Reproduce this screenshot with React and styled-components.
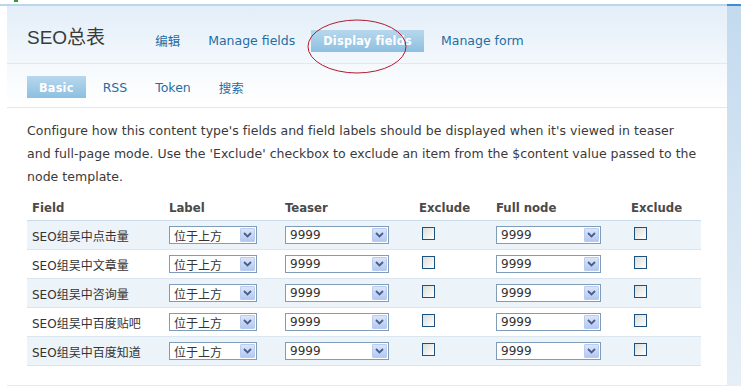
import React from 'react';
import styled, { createGlobalStyle } from 'styled-components';

const GlobalStyle = createGlobalStyle`
  html, body {
    margin: 0;
    padding: 0;
    background: #ffffff;
  }
  body {
    font-family: "DejaVu Sans", "Noto Sans CJK SC", sans-serif;
    color: #333;
  }
`;

const Page = styled.div`
  display: flex;
  width: 741px;
  height: 386px;
  overflow: hidden;
  position: relative;
`;

const MainCol = styled.div`
  width: 727px;
  display: flex;
  flex-direction: column;
`;

const TopStrip = styled.div`
  height: 4px;
  display: flex;
`;

const GreenMark = styled.div`
  width: 4px;
  height: 2px;
  margin-left: 14px;
  background: #2f9a3c;
`;

const TopLine = styled.div`
  height: 2px;
  background: #bcd6ec;
`;

const Panel = styled.div`
  margin-left: 7px;
  flex: 1;
  display: flex;
  flex-direction: column;
  background: #fff;
`;

const Header = styled.div`
  height: 57px;
  display: flex;
  align-items: center;
  padding-left: 20px;
  background: linear-gradient(#e3eef8, #f3f8fc);
  border-bottom: 1px solid #dfe9f1;
`;

const Title = styled.h1`
  margin: 2px 38px 0 0;
  font-size: 19px;
  font-weight: normal;
  color: #3a3a3a;
  font-family: "Liberation Sans", "Noto Sans CJK SC", sans-serif;
`;

const TabList = styled.div`
  display: flex;
  align-items: center;
  margin-top: 12px;
`;

const Tab = styled.a`
  display: flex;
  align-items: center;
  height: 22px;
  padding: 0 12px;
  margin-right: ${({ active }) => (active ? '5px' : '4px')};
  font-size: 12.5px;
  text-decoration: none;
  color: ${({ active }) => (active ? '#ffffff' : '#1f6ea6')};
  font-weight: ${({ active }) => (active ? 'bold' : 'normal')};
  letter-spacing: ${({ active }) => (active ? '0.25px' : '0')};
  font-family: ${({ active }) =>
    active
      ? '"DejaVu Sans Condensed", "DejaVu Sans", sans-serif'
      : '"DejaVu Sans", "Noto Sans CJK SC", sans-serif'};
  background: ${({ active }) =>
    active ? 'linear-gradient(#b7d8ee, #8dbfe0)' : 'transparent'};
`;

const SubTabs = styled.div`
  display: flex;
  align-items: center;
  padding: 12px 0 9px 20px;
  background: linear-gradient(#f5f9fc, #ffffff);
  border-bottom: 1px solid #e1e9ef;
`;

const Body = styled.div`
  flex: 1;
  padding: 11px 20px 0 20px;
  border-bottom: 1px solid #e4ebf1;
`;

const Intro = styled.p`
  margin: 0;
  font-size: 12.5px;
  letter-spacing: 0.03px;
  line-height: 23px;
  white-space: nowrap;
  color: #3a3a3a;
`;

const Table = styled.div`
  margin-top: 6px;
  width: 674px;
`;

const Row = styled.div`
  display: grid;
  grid-template-columns: 137px 116px 134px 77px 135px 75px;
  align-items: ${({ head }) => (head ? 'end' : 'center')};
  box-sizing: border-box;
  height: ${({ head }) => (head ? '27px' : '29px')};
  padding-bottom: ${({ head }) => (head ? '5px' : '0')};
  background: ${({ head, shade }) =>
    head ? 'transparent' : shade ? '#ecf4fa' : '#ffffff'};
  border-bottom: 1px solid ${({ head }) => (head ? '#c9dded' : '#d9e6f0')};
`;

const HeadCell = styled.div`
  padding-left: 5px;
  font-family: "DejaVu Sans Condensed", "DejaVu Sans", sans-serif;
  font-size: 13px;
  font-weight: bold;
  color: #4a4a4a;
`;

const Cell = styled.div`
  padding-left: 5px;
  font-size: 12px;
  color: #333;
  display: flex;
  align-items: center;
`;

const SelectBox = styled.div`
  box-sizing: border-box;
  width: ${({ w }) => w}px;
  height: 18px;
  border: 1px solid #7f9db9;
  background: #fff;
  display: flex;
  align-items: center;
  justify-content: space-between;
  padding: 0 1px 0 4px;
  font-size: 12px;
  color: #333;
`;

const ArrowBtn = styled.span`
  box-sizing: border-box;
  width: 15px;
  height: 14px;
  border: 1px solid #b9cbef;
  border-radius: 1px;
  background: linear-gradient(#dbe5fb, #b3c8f2);
  display: flex;
  align-items: center;
  justify-content: center;
`;

const Check = styled.span`
  box-sizing: border-box;
  display: block;
  width: 13px;
  height: 13px;
  margin: -4px 0 0 3px;
  border: 1px solid #1c5180;
  background: linear-gradient(135deg, #dcdcd7, #ffffff);
`;

const SidePanel = styled.div`
  flex: 1;
  display: flex;
  flex-direction: column;
`;

const SideTop = styled.div`
  height: 4px;
  background: #fff;
`;

const SideLine = styled.div`
  height: 2px;
  background: #3f8bd5;
`;

const SideFill = styled.div`
  flex: 1;
  background: linear-gradient(#c3daee, #e6eff7);
`;

const Annotation = styled.svg`
  position: absolute;
  left: 307px;
  top: 19px;
  pointer-events: none;
`;

const Select = ({ w, value }) => (
  <SelectBox w={w}>
    <span>{value}</span>
    <ArrowBtn>
      <svg width="9" height="6" viewBox="0 0 9 6">
        <path d="M1 1 L4.5 4.5 L8 1" fill="none" stroke="#4a5f88" strokeWidth="1.8" />
      </svg>
    </ArrowBtn>
  </SelectBox>
);

const fields = [
  'SEO组吴中点击量',
  'SEO组吴中文章量',
  'SEO组吴中咨询量',
  'SEO组吴中百度贴吧',
  'SEO组吴中百度知道',
];

const App = () => (
  <>
    <GlobalStyle />
    <Page>
      <MainCol>
        <TopStrip>
          <GreenMark />
        </TopStrip>
        <TopLine />
        <Panel>
          <Header>
            <Title>SEO总表</Title>
            <TabList>
              <Tab>编辑</Tab>
              <Tab>Manage fields</Tab>
              <Tab active>Display fields</Tab>
              <Tab>Manage form</Tab>
            </TabList>
          </Header>
          <SubTabs>
            <Tab active>Basic</Tab>
            <Tab>RSS</Tab>
            <Tab>Token</Tab>
            <Tab>搜索</Tab>
          </SubTabs>
          <Body>
            <Intro>
              Configure how this content type's fields and field labels should be displayed when it's viewed in teaser
              <br />
              and full-page mode. Use the 'Exclude' checkbox to exclude an item from the $content value passed to the
              <br />
              node template.
            </Intro>
            <Table>
              <Row head>
                <HeadCell>Field</HeadCell>
                <HeadCell>Label</HeadCell>
                <HeadCell>Teaser</HeadCell>
                <HeadCell>Exclude</HeadCell>
                <HeadCell>Full node</HeadCell>
                <HeadCell>Exclude</HeadCell>
              </Row>
              {fields.map((name, i) => (
                <Row key={name} shade={i % 2 === 0}>
                  <Cell>{name}</Cell>
                  <Cell><Select w={88} value="位于上方" /></Cell>
                  <Cell><Select w={104} value="9999" /></Cell>
                  <Cell><Check /></Cell>
                  <Cell><Select w={105} value="9999" /></Cell>
                  <Cell><Check /></Cell>
                </Row>
              ))}
            </Table>
          </Body>
        </Panel>
      </MainCol>
      <SidePanel>
        <SideTop />
        <SideLine />
        <SideFill />
      </SidePanel>
      <Annotation width="100" height="56" viewBox="0 0 100 56">
        <ellipse cx="50" cy="27.5" rx="49" ry="26.5" fill="none" stroke="#b01a2e" strokeWidth="1" />
      </Annotation>
    </Page>
  </>
);

export default App;
